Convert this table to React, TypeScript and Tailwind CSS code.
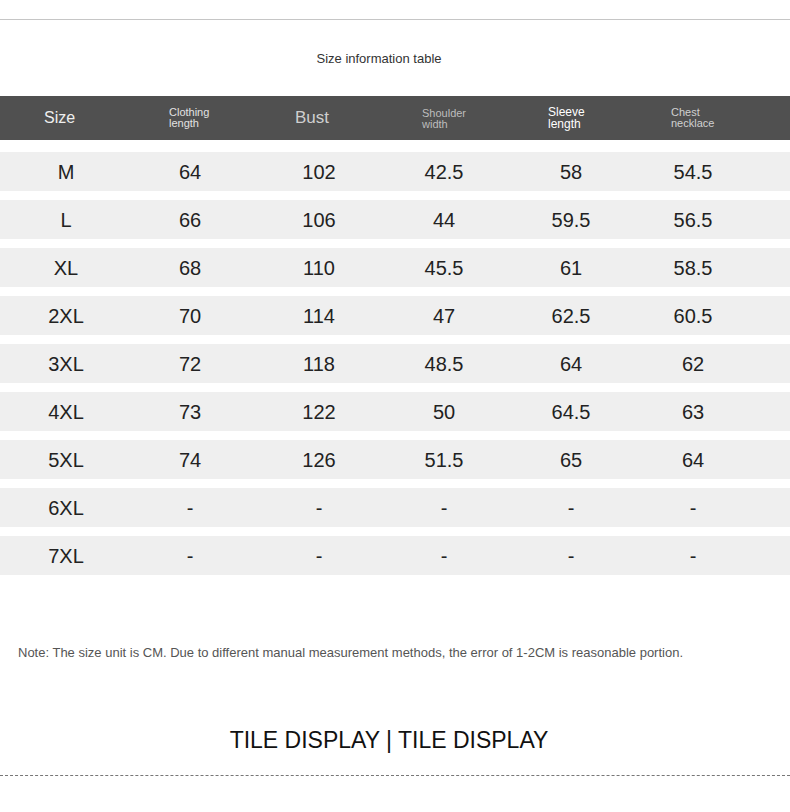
const rows = [
  ['M', '64', '102', '42.5', '58', '54.5'],
  ['L', '66', '106', '44', '59.5', '56.5'],
  ['XL', '68', '110', '45.5', '61', '58.5'],
  ['2XL', '70', '114', '47', '62.5', '60.5'],
  ['3XL', '72', '118', '48.5', '64', '62'],
  ['4XL', '73', '122', '50', '64.5', '63'],
  ['5XL', '74', '126', '51.5', '65', '64'],
  ['6XL', '-', '-', '-', '-', '-'],
  ['7XL', '-', '-', '-', '-', '-'],
]

export default function App() {
  return (
    <div className="w-[790px] h-[812px] bg-white overflow-hidden font-['Liberation_Sans',Arial,sans-serif]">
      <div className="pt-[19px]">
        <div className="h-px bg-[#c6c6c6]" />
      </div>

      <div className="h-[76px] pt-[31px] pr-[32px] text-center text-[13px] leading-[16px] text-[#333]">
        Size information table
      </div>

      {/* header */}
      <div className="h-[44px] bg-[#505050] grid grid-cols-[126px_122px_136px_114px_140px_104px] pl-[3px] items-center">
        <div className="pl-[41px] text-[16px] leading-[18px] text-[#eeeeee]">Size</div>
        <div className="pl-[40px] text-[11px] leading-[11px] text-[#e2e2e2]">
          Clothing
          <br />
          length
        </div>
        <div className="pl-[44px] text-[17px] leading-[18px] text-[#cfcfcf]">Bust</div>
        <div className="pl-[35px] text-[11px] leading-[11px] text-[#bdbdbd] pt-[2px]">
          Shoulder
          <br />
          width
        </div>
        <div className="pl-[47px] text-[12px] leading-[12px] text-white">
          Sleeve
          <br />
          length
        </div>
        <div className="pl-[30px] text-[11px] leading-[11px] text-[#d0d0d0]">
          Chest
          <br />
          necklace
        </div>
      </div>

      {/* rows */}
      <div className="mt-[12px] flex flex-col gap-[9px]">
        {rows.map((r) => (
          <div
            key={r[0]}
            className="h-[39px] bg-[#efefef] grid grid-cols-[126px_122px_136px_114px_140px_104px] pl-[3px] items-center text-[20px] leading-[24px] text-[#222]"
          >
            {r.map((c, i) => (
              <div key={i} className="text-center">
                {c}
              </div>
            ))}
          </div>
        ))}
      </div>

      <div className="mt-[70px] pl-[18px] text-[13px] leading-[16px] text-[#555]">
        Note: The size unit is CM. Due to different manual measurement methods, the error of 1-2CM is reasonable portion.
      </div>

      <div className="mt-[65px] pr-[12px] text-center text-[23px] leading-[28px] text-[#111]">
        TILE DISPLAY | TILE DISPLAY
      </div>

      <div className="mt-[21px] border-t border-dashed border-[#777]" />
    </div>
  )
}
